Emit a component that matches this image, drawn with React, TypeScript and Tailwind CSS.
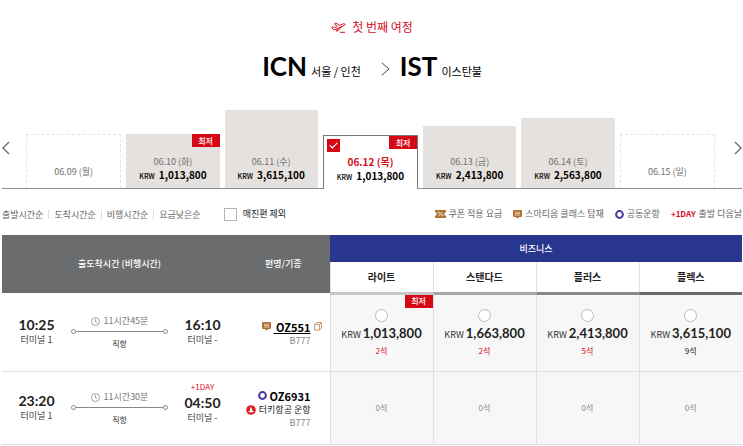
import { useState } from 'react'
import clsx from 'clsx'

type Fare = { day: string; price?: string; height: string; lowest?: boolean }

// Bar heights follow the fare of the day; days without a fare are outlined.
const days: Fare[] = [
  { day: '06.09 (월)', height: 'h-[54px]' },
  { day: '06.10 (화)', price: '1,013,800', height: 'h-[54px]', lowest: true },
  { day: '06.11 (수)', price: '3,615,100', height: 'h-[78px]' },
  { day: '06.12 (목)', price: '1,013,800', height: 'h-[54px]', lowest: true },
  { day: '06.13 (금)', price: '2,413,800', height: 'h-[62px]' },
  { day: '06.14 (토)', price: '2,563,800', height: 'h-[70px]' },
  { day: '06.15 (일)', height: 'h-[54px]' },
]

const classes = [
  { name: '라이트', bar: 'border-b-[#c6c6c6]' },
  { name: '스탠다드', bar: 'border-b-[#a6a7a9]' },
  { name: '플러스', bar: 'border-b-[#87888a]' },
  { name: '플렉스', bar: 'border-b-[#6b6c6e]' },
]

const sorts = ['출발시간순', '도착시간순', '비행시간순', '요금낮은순']

const seats = [
  { price: '1,013,800', left: '2석', few: true, lowest: true },
  { price: '1,663,800', left: '2석', few: true },
  { price: '2,413,800', left: '5석', few: true },
  { price: '3,615,100', left: '9석' },
]

function PlaneIcon() {
  return (
    <svg width="15" height="11" viewBox="0 0 15 11" fill="none" stroke="#d60b1c" strokeWidth="1" strokeLinejoin="round" aria-hidden="true">
      <path d="M.8 5.4 2 4.8 3.6 5.7 6 4.6 3.6 1.7 4.9 1.2 8.7 3.4 11.6 2C12.8 1.4 14 1.7 14 2.4 14 3 13.4 3.4 12.6 3.8L4.2 7.6C3.4 8 2.6 7.9 2 7.3Z" />
      <path d="M7.2 6.2 5.4 9.2 6.8 8.9 10.6 4.8M9 10.3h5" />
    </svg>
  )
}

function Chevron({ back = false }: { back?: boolean }) {
  return (
    <svg width="8" height="14" viewBox="0 0 8 14" fill="none" stroke="#666" strokeWidth="1.3" aria-hidden="true">
      <path d={back ? 'M7 1 1 7l6 6' : 'M1 1l6 6-6 6'} />
    </svg>
  )
}

function CouponIcon() {
  return (
    <svg width="11" height="8" viewBox="0 0 11 8" aria-hidden="true">
      <path d="M0 0h11v2.2a1.8 1.8 0 0 0 0 3.6V8H0V5.8a1.8 1.8 0 0 0 0-3.6Z" fill="#ad7032" />
      <path d="M7.2 1.8 3.8 6.2" stroke="#fff" strokeWidth="0.8" />
      <circle cx="3.8" cy="2.7" r="0.8" fill="none" stroke="#fff" strokeWidth="0.6" />
      <circle cx="7.2" cy="5.3" r="0.8" fill="none" stroke="#fff" strokeWidth="0.6" />
    </svg>
  )
}

function SmartiumIcon() {
  return (
    <svg width="9" height="9" viewBox="0 0 9 9" aria-hidden="true">
      <path d="M1 0h7q1 0 1 1v5q0 1-1 1H6.2L4.5 8.8 2.8 7H1Q0 7 0 6V1q0-1 1-1Z" fill="#b07238" />
      <path d="M2 2.3h5M2 3.7h5M2 5.1h5" stroke="#f6e3cf" strokeWidth="0.7" />
    </svg>
  )
}

function CodeshareIcon() {
  return (
    <svg width="9" height="9" viewBox="0 0 9 9" aria-hidden="true">
      <circle cx="4.5" cy="4.5" r="3.4" fill="none" stroke="#4e359c" strokeWidth="2" />
    </svg>
  )
}

function PopupIcon() {
  return (
    <svg width="8" height="9" viewBox="0 0 8 9" fill="none" stroke="#c58b60" strokeWidth="0.9" aria-hidden="true">
      <path d="M.6 2.6h4.8v5.6H.6ZM.6 2.6 2.4.6h5v5.6L5.4 8.2M5.4 2.6l2-2" />
    </svg>
  )
}

function TurkishIcon() {
  return (
    <svg width="10" height="10" viewBox="0 0 10 10" aria-hidden="true">
      <circle cx="5" cy="5" r="4.8" fill="#dc1f26" />
      <path d="M1.6 6.6C3.2 6.6 4.4 5.6 4.3 4.2L4 2.2C5.2 2.2 6 3 6 4.2 6 5.6 6.9 6.3 8.4 6.2 6.6 7.6 3.6 7.8 1.6 6.6Z" fill="#fff" />
    </svg>
  )
}

function ClockIcon() {
  return (
    <svg width="9" height="9" viewBox="0 0 9 9" fill="none" stroke="#888" strokeWidth="0.8" aria-hidden="true">
      <circle cx="4.5" cy="4.5" r="4" />
      <path d="M4.5 2v2.7l1.7 1" />
    </svg>
  )
}

function Lowest() {
  return (
    <span className="absolute top-0 right-0 flex h-[13px] w-7 items-center justify-center bg-[#d60815] text-[8px] font-medium text-white">
      최저
    </span>
  )
}

function DayTile({ fare, selected, onSelect }: { fare: Fare; selected: boolean; onSelect: () => void }) {
  return (
    <button
      type="button"
      aria-pressed={selected}
      onClick={onSelect}
      className={clsx(
        'relative flex flex-1 flex-col items-center justify-end',
        fare.height,
        !fare.price && 'border border-b-0 border-dashed border-[#e4e4e4] pb-2.5',
        fare.price && 'pb-[5px]',
        fare.price && !selected && 'bg-[#e5e1de]',
        selected && '-mb-px border border-b-0 border-[#77787a] bg-white',
      )}
    >
      {fare.lowest && <Lowest />}
      {selected && (
        <span className="absolute top-[3px] left-[3px] flex size-[13px] items-center justify-center bg-[#d60815]">
          <svg width="9" height="7" viewBox="0 0 9 7" fill="none" stroke="#fff" strokeWidth="1.2" aria-hidden="true">
            <path d="M.8 3.4 3.3 6 8.3.8" />
          </svg>
        </span>
      )}
      <span className={selected ? 'text-[10px] leading-[14px] font-bold text-[#d60b1c]' : 'text-[9px] leading-3 text-[#707070]'}>
        {fare.day}
      </span>
      {fare.price && (
        <span className="flex items-baseline gap-1 text-[10px] leading-[14px] font-bold text-black">
          <span className="text-[7px] font-medium">KRW</span>
          {fare.price}
        </span>
      )}
    </button>
  )
}

function Point({ time, terminal, nextDay }: { time: string; terminal: string; nextDay?: boolean }) {
  return (
    <div className={clsx('flex w-[69px] flex-col items-center', nextDay && 'pb-3')}>
      {nextDay && <span className="text-[8px] leading-4 text-[#d60b1c]">+1DAY</span>}
      <span className="font-['Lato',sans-serif] text-[14px] leading-4 font-bold text-[#222]">{time}</span>
      <span className="text-[9px] leading-[14px] text-[#444]">{terminal}</span>
    </div>
  )
}

function Leg({ from, to, duration, nextDay }: { from: string; to: string; duration: string; nextDay?: boolean }) {
  return (
    <div className="flex items-center">
      <Point time={from} terminal="터미널 1" />
      <div className="flex flex-1 flex-col items-center pt-0.5">
        <span className="flex items-center gap-1 text-[9px] leading-3 text-[#777]">
          <ClockIcon />
          {duration}
        </span>
        <span className="mt-0.5 mb-1 flex w-full items-center">
          <i className="size-[5px] rounded-full border border-[#888]" />
          <i className="h-px flex-1 bg-[#888]" />
          <i className="size-[5px] rounded-full border border-[#888]" />
        </span>
        <span className="text-[8px] leading-3 text-[#333]">직항</span>
      </div>
      <Point time={to} terminal="터미널 -" nextDay={nextDay} />
    </div>
  )
}

export default function App() {
  const [day, setDay] = useState('06.12 (목)')

  return (
    <main className="bg-white pt-[19px] pr-px pl-0.5 font-['Noto_Sans_CJK_KR',sans-serif] text-[9px] text-[#666]">
      <header className="flex flex-col items-center">
        <p className="flex items-center gap-1.5 text-[12px] leading-4 text-[#d60b1c]">
          <PlaneIcon />첫 번째 여정
        </p>
        <h1 className="mt-[15px] flex items-baseline text-[11px] leading-8 text-black">
          <b className="mr-1 font-['Lato',sans-serif] text-[26px]">ICN</b>
          서울 / 인천
          <svg className="mr-2.5 ml-5 self-center" width="9" height="14" viewBox="0 0 9 14" fill="none" stroke="#333" strokeWidth="0.9" aria-hidden="true">
            <path d="M.8.8 8 7 .8 13.2" />
          </svg>
          <b className="mr-1 font-['Lato',sans-serif] text-[26px]">IST</b>
          이스탄불
        </h1>
      </header>

      <section className="mt-[23px] flex items-end border-b border-[#8c8d8f]">
        <button type="button" aria-label="이전 날짜" className="mb-[33px] w-6">
          <Chevron back />
        </button>
        <div className="flex flex-1 items-end gap-[5px]">
          {days.map((fare) => (
            <DayTile key={fare.day} fare={fare} selected={fare.day === day} onSelect={() => setDay(fare.day)} />
          ))}
        </div>
        <button type="button" aria-label="다음 날짜" className="mb-[33px] flex w-[27px] justify-end">
          <Chevron />
        </button>
      </section>

      <div className="flex h-[46px] items-center pt-1">
        <div className="flex divide-x divide-[#ddd] leading-[9px]">
          {sorts.map((s) => (
            <button key={s} type="button" className="px-[5px] first:pl-0">
              {s}
            </button>
          ))}
        </div>
        <label className="ml-[18px] flex items-center gap-1.5 text-[#222]">
          <input type="checkbox" className="size-[13px] appearance-none border border-[#b5b5b5] bg-white checked:bg-[#d60815]" />
          매진편 제외
        </label>
        <ul className="ml-auto flex gap-[11px]">
          <li className="flex items-center gap-[3px]">
            <CouponIcon />
            쿠폰 적용 요금
          </li>
          <li className="flex items-center gap-[3px]">
            <SmartiumIcon />
            스마티움 클래스 탑재
          </li>
          <li className="flex items-center gap-[3px]">
            <CodeshareIcon />
            공동운항
          </li>
          <li className="flex items-center gap-[3px]">
            <b className="text-[8px] text-[#d60b1c]">+1DAY</b>
            출발 다음날
          </li>
        </ul>
      </div>

      <table className="w-full table-fixed border-collapse border-b border-[#e0e0e0] text-center">
        <colgroup>
          <col className="w-[235px]" />
          <col className="w-[93px]" />
          <col span={4} />
        </colgroup>
        <thead className="text-[9px]">
          <tr className="h-[27px] text-white">
            <th rowSpan={2} scope="col" className="bg-[#6b6c6e] font-medium">
              출도착시간 (비행시간)
            </th>
            <th rowSpan={2} scope="col" className="bg-[#6b6c6e] font-medium">
              편명/기종
            </th>
            <th colSpan={4} scope="colgroup" className="bg-[#28368e] font-medium">
              비즈니스
            </th>
          </tr>
          <tr className="h-[31px] text-[10px] text-[#222]">
            {classes.map((c) => (
              <th key={c.name} scope="col" className={clsx('border-b-[3px] border-l border-l-[#e0e0e0] font-bold', c.bar)}>
                {c.name}
              </th>
            ))}
          </tr>
        </thead>
        <tbody>
          <tr className="h-[78px] border-b border-[#e0e0e0]">
            <td>
              <Leg from="10:25" to="16:10" duration="11시간45분" />
            </td>
            <td className="pt-1 pr-[19px]">
              <div className="-mr-[11px] flex items-center justify-end gap-[3px]">
                <SmartiumIcon />
                <a href="#oz551" className="text-[11px] leading-[14px] font-bold whitespace-pre text-black underline">
                  {' OZ551'}
                </a>
                <PopupIcon />
              </div>
              <p className="text-right leading-[14px] text-[#888]">B777</p>
            </td>
            {seats.map((s) => (
              <td key={s.price} className="relative border-l border-[#e0e0e0] bg-[#f7f7f7]">
                {s.lowest && <Lowest />}
                <label className="flex flex-col items-center pt-0.5">
                  <input type="radio" name="fare" className="size-[13px] appearance-none rounded-full border border-[#bbb] bg-white checked:border-4 checked:border-[#d60815]" />
                  <span className="mt-0.5 flex items-baseline gap-0.5 leading-[18px] text-[#333]">
                    KRW
                    <b className="font-['Lato',sans-serif] text-[13px] text-[#222]">{s.price}</b>
                  </span>
                  <span className={clsx('text-[8px] leading-[14px]', s.few ? 'text-[#d60b1c]' : 'text-[#222]')}>{s.left}</span>
                </label>
              </td>
            ))}
          </tr>
          <tr className="h-[73px]">
            <td>
              <Leg from="23:20" to="04:50" duration="11시간30분" nextDay />
            </td>
            <td className="pt-0.5 pr-[19px]">
              <p className="flex items-center justify-end gap-[3px] text-[11px] leading-[14px] font-bold text-black">
                <CodeshareIcon />
                OZ6931
              </p>
              <p className="flex items-center justify-end gap-[3px] leading-[14px] whitespace-nowrap text-[#222]">
                <TurkishIcon />
                터키항공 운항
              </p>
              <p className="text-right leading-3 text-[#888]">B777</p>
            </td>
            {classes.map((c) => (
              <td key={c.name} className="border-l border-[#e0e0e0] bg-[#f7f7f7] text-[8px] text-[#888]">
                0석
              </td>
            ))}
          </tr>
        </tbody>
      </table>
    </main>
  )
}
